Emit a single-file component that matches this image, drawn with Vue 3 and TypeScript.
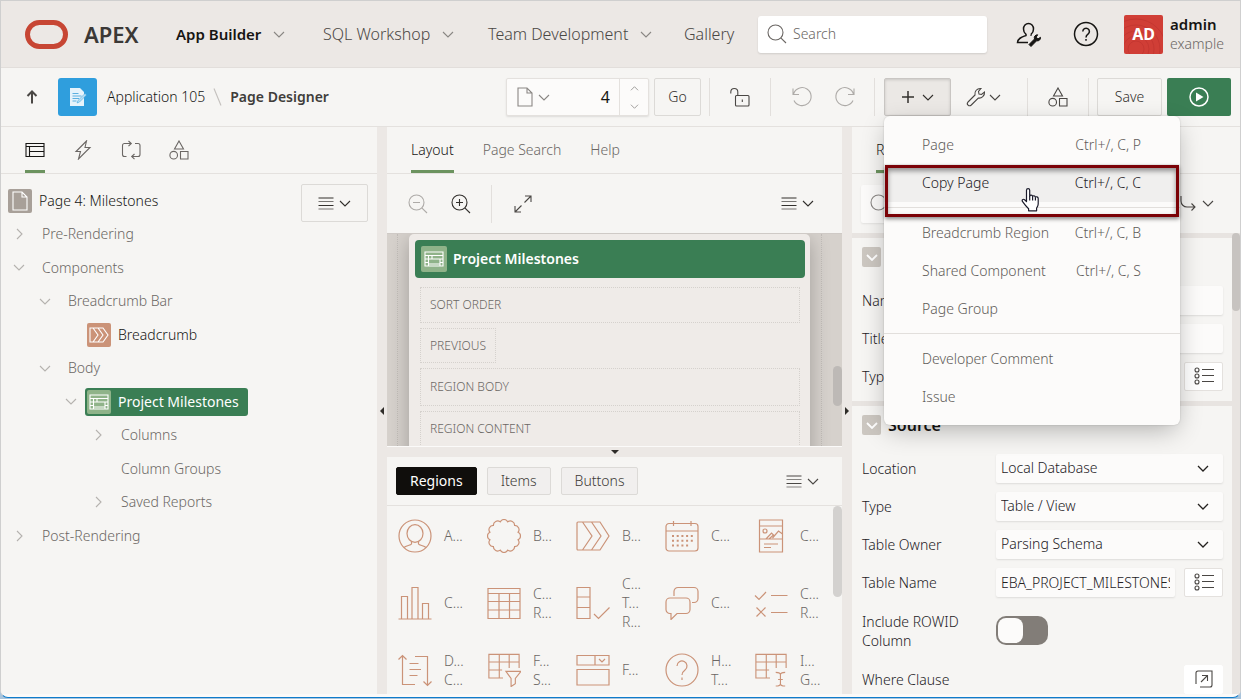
<script setup lang="ts">
import { ref } from 'vue'

interface NavItem { label: string; active?: boolean; menu?: boolean; cls: string }
interface TreeNode { label: string; level: number; state?: 'open' | 'closed'; kind?: 'page' | 'breadcrumb' | 'grid' }
interface MenuEntry { label: string; keys?: string; active?: boolean }
interface GalleryItem { icon: string; lines: string[] }

const nav: NavItem[] = [
  { label: 'App Builder', active: true, menu: true, cls: 'n1' },
  { label: 'SQL Workshop', menu: true, cls: 'n2' },
  { label: 'Team Development', menu: true, cls: 'n3' },
  { label: 'Gallery', cls: 'n4' },
]

const treeTabs = [
  { icon: 'rendering', label: 'Rendering' },
  { icon: 'bolt', label: 'Dynamic Actions' },
  { icon: 'process', label: 'Processing' },
  { icon: 'shapes', label: 'Page Shared Components' },
]

const tree: TreeNode[] = [
  { label: 'Page 4: Milestones', level: 0, kind: 'page' },
  { label: 'Pre-Rendering', level: 1, state: 'closed' },
  { label: 'Components', level: 1, state: 'open' },
  { label: 'Breadcrumb Bar', level: 2, state: 'open' },
  { label: 'Breadcrumb', level: 3, kind: 'breadcrumb' },
  { label: 'Body', level: 2, state: 'open' },
  { label: 'Project Milestones', level: 3, state: 'open', kind: 'grid' },
  { label: 'Columns', level: 4, state: 'closed' },
  { label: 'Column Groups', level: 4 },
  { label: 'Saved Reports', level: 4, state: 'closed' },
  { label: 'Post-Rendering', level: 1, state: 'closed' },
]

const menuGroups: MenuEntry[][] = [
  [
    { label: 'Page', keys: 'Ctrl+/, C, P' },
    { label: 'Copy Page', keys: 'Ctrl+/, C, C', active: true },
  ],
  [
    { label: 'Breadcrumb Region', keys: 'Ctrl+/, C, B' },
    { label: 'Shared Component', keys: 'Ctrl+/, C, S' },
    { label: 'Page Group' },
  ],
  [{ label: 'Developer Comment' }, { label: 'Issue' }],
]

const gallery: GalleryItem[] = [
  { icon: 'g-avatar', lines: ['A...'] },
  { icon: 'g-badge', lines: ['B...'] },
  { icon: 'g-crumb', lines: ['B...'] },
  { icon: 'g-calendar', lines: ['C...'] },
  { icon: 'g-card', lines: ['C...'] },
  { icon: 'g-chart', lines: ['C...'] },
  { icon: 'g-table', lines: ['C...', 'R...'] },
  { icon: 'g-check', lines: ['C...', 'T...', 'R...'] },
  { icon: 'g-comments', lines: ['C...'] },
  { icon: 'g-list', lines: ['C...', 'R...'] },
  { icon: 'g-dynamic', lines: ['D...', 'C...'] },
  { icon: 'g-facet', lines: ['F...', 'S...'] },
  { icon: 'g-form', lines: ['F...'] },
  { icon: 'g-help', lines: ['H...', 'T...'] },
  { icon: 'g-igrid', lines: ['I...', 'G...'] },
]

const pageNo = ref('4')
const tableName = ref('EBA_PROJECT_MILESTONES')
const rowid = ref(false)
</script>

<template>
  <div class="window">
    <svg class="defs" aria-hidden="true">
      <symbol id="down" viewBox="0 0 12 7"><path d="M1 1l5 5 5-5" /></symbol>
      <symbol id="right" viewBox="0 0 7 12"><path d="M1 1l5 5-5 5" /></symbol>
      <symbol id="lines" viewBox="0 0 16 13">
        <path d="M.5 1h15M.5 8.500h15" /><path d="M.5 4.500h15M.5 12h15" opacity=".65" />
      </symbol>
      <symbol id="lens" viewBox="0 0 20 20"><circle cx="8.500" cy="8.500" r="7.500" /><path d="M13.800 13.800L19 19" /></symbol>
      <symbol id="doc" viewBox="0 0 16 20"><path d="M1 1h9l5 5v13H1zM10 1v5h5" /></symbol>
      <symbol id="shapes" viewBox="0 0 20 20">
        <path d="M10 1l4.500 8h-9zM11.500 11.500h7.500v7.500h-7.500z" /><circle cx="4.700" cy="15.200" r="3.800" />
      </symbol>
      <symbol id="rendering" viewBox="0 0 20 20">
        <path d="M1 3.500h18v13H1zM1 6.500h18M4.500 6.500v10M4.500 11.500H19" />
      </symbol>
      <symbol id="bolt" viewBox="0 0 20 20"><path d="M13.500 1L3 11.500h4.500L5.500 19 17 7.500h-5L13.500 1z" /></symbol>
      <symbol id="process" viewBox="0 0 20 20">
        <path d="M10 3.500H3.500a2 2 0 0 0-2 2v9a2 2 0 0 0 2 2h2M7.500 1l2.800 2.500-2.800 2.700M14 3.500h3a2 2 0 0 1 2 2v9a2 2 0 0 1-2 2h-6M13.500 14l-2.800 2.500 2.800 2.700" />
      </symbol>
      <symbol id="gridicon" viewBox="0 0 20 16">
        <path d="M1 1h18v14H1zM1 4.500h18M4.500 4.500V15M4.500 8H12M8 4.500V8M12 8h7M16 8v7M1 8h3.500M1 11.500h3.500M16 11.500h3M4.500 13h11.500" />
      </symbol>
      <symbol id="listicon" viewBox="0 0 20 18">
        <circle cx="3" cy="3" r="2" /><circle cx="3" cy="9" r="2" /><circle cx="3" cy="15" r="2" />
        <path d="M8 2.500h12M8 8.500h12M8 14.500h12" />
      </symbol>
      <symbol id="g-avatar" viewBox="0 0 34 34">
        <circle cx="17" cy="17" r="16" /><ellipse cx="17" cy="14.500" rx="8" ry="8.800" />
        <path d="M6 28.500c2-2 6.500-2 7.500-3.500v-2.500M28 28.500c-2-2-6.500-2-7.500-3.500v-2.500" />
      </symbol>
      <symbol id="g-badge" viewBox="0 0 34 34">
        <path d="M13.200 2.900a4.200 4.200 0 0 1 7.600 0a4.200 4.200 0 0 1 6.800 3.500a4.200 4.200 0 0 1 3.500 6.800a4.200 4.200 0 0 1 0 7.600a4.200 4.200 0 0 1-3.500 6.800a4.200 4.200 0 0 1-6.800 3.500a4.200 4.200 0 0 1-7.600 0a4.200 4.200 0 0 1-6.800-3.500a4.200 4.200 0 0 1-3.500-6.800a4.200 4.200 0 0 1 0-7.600a4.200 4.200 0 0 1 3.500-6.800a4.200 4.200 0 0 1 6.800-3.500z" />
      </symbol>
      <symbol id="g-crumb" viewBox="0 0 34 34">
        <path d="M2 3h22l9 14-9 14H2a1 1 0 0 1-1-1V4a1 1 0 0 1 1-1zM6.500 3l9.500 14-9.500 14M15.500 3l9.500 14-9.500 14" />
      </symbol>
      <symbol id="g-calendar" viewBox="0 0 34 34">
        <path d="M4 4.500h26a3 3 0 0 1 3 3V29a3 3 0 0 1-3 3H4a3 3 0 0 1-3-3V7.500a3 3 0 0 1 3-3zM1 12h32M8.500 2v5M26 2v5" />
        <path stroke-width="2" stroke-dasharray="2 2.700" d="M7 17h22M7 21.700h22M7 26.500h17" />
      </symbol>
      <symbol id="g-card" viewBox="0 0 34 34">
        <path d="M5.500 1h23v32h-23zM5.500 7h23M5.500 20h23M12 20l5.500-6 2 2-4.500 4M18.500 19l6-7 4 3M10 25h14M10 28.500h7" /><circle cx="11" cy="12" r="2" />
      </symbol>
      <symbol id="g-chart" viewBox="0 0 34 34">
        <path d="M.5 33h33M3.500 33V10.500h6V33M14 33V1.500h6V33M24.500 33V17.500h6V33" />
      </symbol>
      <symbol id="g-table" viewBox="0 0 34 34">
        <path d="M1 2.500h32v30H1zM1 7.500h32M1 15.500h32M1 24h32M12 7.500v25M22.500 7.500v25" />
      </symbol>
      <symbol id="g-check" viewBox="0 0 34 34">
        <path d="M1 1.500h13v31H1zM1 11h13M1 21.500h13M18 28l4.500 4.500L33.500 21.500" />
      </symbol>
      <symbol id="g-comments" viewBox="0 0 34 34">
        <path d="M9 10V5.500a4 4 0 0 1 4-4h16a4 4 0 0 1 4 4v7a4 4 0 0 1-4 4h-2M5 12h16a4 4 0 0 1 4 4v7.500a4 4 0 0 1-4 4h-9l-6 6v-6H5a4 4 0 0 1-4-4V16a4 4 0 0 1 4-4z" />
      </symbol>
      <symbol id="g-list" viewBox="0 0 34 34">
        <path d="M1 9.500l4 4 7-7.500M17 9.500h16.500M17 26.500h16.500M2.500 21.500l9 9M11.500 21.500l-9 9" />
      </symbol>
      <symbol id="g-dynamic" viewBox="0 0 34 34">
        <path d="M4.500 2.500v29H17M.5 6.500l4-4 4 4M17 3.500h12.500v29M25.500 28.500l4 4 4-4M11.500 10.500h9M11.500 16.500h11.500M11.500 22.500h8" />
      </symbol>
      <symbol id="g-facet" viewBox="0 0 34 36">
        <path d="M16 26.500H1v-25h32V16M1 9.500h32M1 18h14M12 1.500v25M22.500 1.500V16M19 19.500h16L29 27v5.500l-4.500 3V27z" />
      </symbol>
      <symbol id="g-form" viewBox="0 0 34 34">
        <path d="M1 2.500h32v9.500H1zM19 2.500V12M23 6l3 3 3-3M1 16.500h32v15.500H1z" />
      </symbol>
      <symbol id="g-help" viewBox="0 0 34 34">
        <circle cx="17" cy="17" r="16" /><path d="M12 13a5 5 0 1 1 8 4c-2 1.500-3 2.500-3 5M17 24.500v2.500" />
      </symbol>
      <symbol id="g-igrid" viewBox="0 0 34 36">
        <path d="M16 26.500H1v-25h32V16M1 9.500h32M1 18h14M12 1.500v25M22.500 1.500V16M27 22v12M24.500 28h5M22 20.500c3 0 5 .5 5 2.500 0-2 2-2.500 5-2.500M22 35c3 0 5-.5 5-2.500 0 2 2 2.500 5 2.500" />
      </symbol>
    </svg>

    <header class="top">
      <a class="brand" href="#" aria-label="APEX home">
        <svg class="logo" viewBox="0 0 43 29"><rect x="2.500" y="2.500" width="38" height="24" rx="12" /></svg>
        <span>APEX</span>
      </a>
      <nav class="nav">
        <a v-for="n in nav" :key="n.label" href="#" :class="[n.cls, { active: n.active }]">
          {{ n.label }}
          <svg v-if="n.menu" class="ico chev"><use href="#down" /></svg>
        </a>
      </nav>
      <label class="search">
        <svg class="ico s20"><use href="#lens" /></svg>
        <input type="text" placeholder="Search" aria-label="Search" />
      </label>
      <button class="plain admin-btn" aria-label="Administration">
        <svg class="ico s26" viewBox="0 0 26 26">
          <path d="M7.500 8a5 5.500 0 1 1 10 0c0 2.500-1.200 4.400-2.500 5.400M7.500 8c0 2.500 1.200 4.400 2.500 5.400v1.100c-4 1.500-8 2.500-8.500 7h10.500M15 13.400v1.400" />
          <path class="spanner" d="M13 23.500l5.500-5.500c-.8-2.200.6-4.200 3.200-4.200l-1.500 2.300 1.800 1.800 2.500-1.600c.2 2.600-1.800 4-3.900 3.500l-5.600 5.700z" />
        </svg>
      </button>
      <button class="plain help-btn" aria-label="Help">
        <svg class="ico s26" viewBox="0 0 26 26"><circle cx="13" cy="13" r="11.500" /><path d="M9.800 10.500a3.300 3.300 0 1 1 5.200 2.700c-1.400 1-2 1.600-2 3.300M13 18v1.800" /></svg>
      </button>
      <a class="user" href="#">
        <span class="avatar">
          <svg viewBox="0 0 39 39" aria-hidden="true"><circle cx="12" cy="34" r="8" /><circle cx="12" cy="34" r="13" /><circle cx="12" cy="34" r="18" /><circle cx="12" cy="34" r="24" /><circle cx="12" cy="34" r="30" /></svg>
          <b>AD</b>
        </span>
        <span class="who"><b>admin</b><small>example</small></span>
      </a>
    </header>

    <div class="toolbar">
      <button class="plain up" aria-label="Up">
        <svg class="ico bold" viewBox="0 0 12 14"><path d="M6 13.500V1.500M1.500 6L6 1.500 10.500 6" /></svg>
      </button>
      <span class="appicon">
        <svg viewBox="0 0 20 20"><path class="sheet" d="M2 1h10l4 4v14H2z" /><path class="ink" d="M4.500 6.500h6M4.500 9h9M4.500 11.500h6.500M4.500 14h4" /><path class="pen" d="M18.500 8l-7 7-2.500 1 1-2.600L17 6.500z" /></svg>
      </span>
      <a class="crumb" href="#">Application 105</a>
      <svg class="ico slash" viewBox="0 0 9 18"><path d="M1 .5l7 17" /></svg>
      <h1>Page Designer</h1>

      <div class="tools">
        <div class="pagebox">
          <button class="plain" aria-label="Select page"><svg class="ico doc"><use href="#doc" /></svg><svg class="ico chev"><use href="#down" /></svg></button>
          <input v-model="pageNo" type="text" aria-label="Page number" />
          <div class="spin">
            <button class="plain flip" aria-label="Next page"><svg class="ico tiny"><use href="#down" /></svg></button>
            <button class="plain" aria-label="Previous page"><svg class="ico tiny"><use href="#down" /></svg></button>
          </div>
        </div>
        <button class="btn go">Go</button>
        <i class="sep"></i>
        <button class="plain w60" aria-label="Unlock"><svg class="ico s20" viewBox="0 0 20 20"><rect x="5.500" y="8.500" width="13.500" height="10.500" rx="1" /><path d="M.800 6.500V5a3.500 3.500 0 0 1 7 0v3.500M12.300 12.500v2.500" /></svg></button>
        <i class="sep flush"></i>
        <div class="history">
          <button class="plain" disabled aria-label="Undo"><svg class="ico s20" viewBox="0 0 20 20"><path d="M1 1.500v6h6M1.500 7A9 9 0 1 1 2 13.500" /></svg></button>
          <button class="plain" disabled aria-label="Redo"><svg class="ico s20" viewBox="0 0 20 20"><path d="M19 1.500v6h-6M18.500 7A9 9 0 1 0 18 13.500" /></svg></button>
        </div>
        <i class="sep flush"></i>
        <div class="create">
          <button class="btn pressed" aria-haspopup="menu" aria-expanded="true" aria-label="Create">
            <svg class="ico plus" viewBox="0 0 12 12"><path d="M6 0v12M0 6h12" /></svg><svg class="ico chev"><use href="#down" /></svg>
          </button>
          <div class="menu" role="menu">
            <div v-for="(g, i) in menuGroups" :key="i" class="group">
              <button v-for="m in g" :key="m.label" class="entry" :class="{ on: m.active }" role="menuitem">
                <span>{{ m.label }}</span><span>{{ m.keys }}</span>
              </button>
            </div>
            <div class="callout"></div>
            <svg class="pointer" viewBox="0 0 20 25">
              <path d="M5.500 14.500V3.200c0-2.200 3.200-2.200 3.200 0v6c.3-1.500 2.800-1.400 2.900.3.500-1.200 2.700-.9 2.800.8.600-1 2.800-.6 2.800 1.200V17c0 1.600-.7 2.900-1.600 4.200v2.600H7.600v-2C5.500 19.800 3.600 17.400 1.600 14.600c-1.200-1.700.6-3 2-1.900z" /><path d="M8.700 9v4.500M11.600 9.700v3.800M14.400 10.500v3" />
            </svg>
          </div>
        </div>
        <button class="plain util" aria-label="Utilities"><svg class="ico s20" viewBox="0 0 20 20"><path d="M2 15l7-7c-.8-3.500 2-7 6-6.500l-2.500 3 .5 2.500 2.500.500 3-2.500c.5 4-3 6.500-6.200 6l-7 7c-2.300 2-5.300-.8-3.300-3z" /></svg><svg class="ico chev"><use href="#down" /></svg></button>
        <i class="sep flush"></i>
        <button class="plain w60" aria-label="Shared components"><svg class="ico s20"><use href="#shapes" /></svg></button>
        <i class="sep flush"></i>
        <button class="btn save">Save</button>
        <button class="run" aria-label="Save and run page">
          <svg viewBox="0 0 20 20"><circle cx="10" cy="10" r="9" /><path d="M7 5.500v9l7.500-4.500z" /></svg>
        </button>
      </div>
    </div>

    <main class="main">
      <section class="pane left">
        <div class="tabs icons">
          <button v-for="(t, i) in treeTabs" :key="t.icon" class="tab" :class="{ active: i === 0 }" :aria-label="t.label">
            <svg class="ico s20"><use :href="'#' + t.icon" /></svg>
          </button>
        </div>
        <div class="treewrap">
          <ul class="tree">
            <li v-for="n in tree" :key="n.label" :class="['l' + n.level, n.kind]">
              <span class="twist"><svg v-if="n.state === 'open'" class="ico chev"><use href="#down" /></svg><svg v-if="n.state === 'closed'" class="ico rchev"><use href="#right" /></svg></span>
              <span class="node">
                <span v-if="n.kind" class="badge">
                  <svg v-if="n.kind === 'page'" class="ico doc"><use href="#doc" /></svg>
                  <svg v-else-if="n.kind === 'grid'" class="ico gi"><use href="#gridicon" /></svg>
                  <svg v-else class="ico s20" viewBox="0 0 20 20"><path d="M1 3h13l5 7-5 7H1zM4 3l5 7-5 7M9 3l5 7-5 7" /></svg>
                </span>{{ n.label }}
              </span>
            </li>
          </ul>
          <button class="btn treemenu" aria-label="Tree menu"><svg class="ico lines"><use href="#lines" /></svg><svg class="ico chev"><use href="#down" /></svg></button>
        </div>
      </section>

      <div class="split"><i class="arrow-l"></i></div>

      <section class="center">
        <div class="pane">
          <div class="tabs text">
            <button class="tab active">Layout</button>
            <button class="tab">Page Search</button>
            <button class="tab">Help</button>
          </div>
          <div class="layoutbar">
            <button class="plain z1" disabled aria-label="Zoom out"><svg class="ico s20"><use href="#lens" /><path d="M5 8.500h7" /></svg></button>
            <button class="plain z2" aria-label="Zoom in"><svg class="ico s20"><use href="#lens" /><path d="M5 8.500h7M8.500 5v7" /></svg></button>
            <i class="sep tall"></i>
            <button class="plain z3" aria-label="Expand"><svg class="ico s18" viewBox="0 0 18 18"><path d="M11 1h6v6M17 1l-6.500 6.500M7 17H1v-6M1 17l6.500-6.500" /></svg></button>
            <button class="plain z4" aria-label="Layout menu"><svg class="ico lines"><use href="#lines" /></svg><svg class="ico chev"><use href="#down" /></svg></button>
          </div>
        </div>
        <div class="canvas">
          <div class="body">
            <div class="card">
              <div class="cardhead"><span class="badge"><svg class="ico gi"><use href="#gridicon" /></svg></span>Project Milestones</div>
              <div class="slots">
                <div class="slot">SORT ORDER</div>
                <div class="slot short">PREVIOUS</div>
                <div class="slot big">REGION BODY</div>
                <div class="slot">REGION CONTENT</div>
              </div>
            </div>
          </div>
          <i class="thumb"></i>
        </div>
        <div class="hsplit"><i class="arrow-d"></i></div>
        <div class="pane bottom">
          <div class="switch">
            <button class="btn dark">Regions</button>
            <button class="btn soft">Items</button>
            <button class="btn soft">Buttons</button>
            <button class="plain z5" aria-label="Gallery menu"><svg class="ico lines"><use href="#lines" /></svg><svg class="ico chev"><use href="#down" /></svg></button>
          </div>
          <div class="gallery">
            <div v-for="g in gallery" :key="g.icon" class="gitem">
              <svg class="gico"><use :href="'#' + g.icon" /></svg>
              <span><span v-for="l in g.lines" :key="l">{{ l }}</span></span>
            </div>
            <i class="thumb"></i>
          </div>
        </div>
      </section>

      <div class="split"><i class="arrow-r"></i></div>

      <section class="pane right">
        <div class="tabs text"><button class="tab active">Region</button></div>
        <div class="filter">
          <label class="fsearch"><svg class="ico s20"><use href="#lens" /></svg><input type="text" aria-label="Filter properties" /></label>
          <button class="plain goto" aria-label="Go to group"><svg class="ico s20" viewBox="0 0 20 20"><path d="M4 2v5a6 6 0 0 0 6 6h8M14.500 9.500L18 13l-3.500 3.500" /></svg><svg class="ico chev"><use href="#down" /></svg></button>
        </div>
        <div class="props">
          <div class="list">
            <div class="sect" aria-label="Identification">
              <div class="sh"><button class="fold" aria-label="Collapse Identification"><svg class="ico chev"><use href="#down" /></svg></button></div>
              <div class="row"><label for="pname">Name</label><input id="pname" type="text" /></div>
              <div class="row"><label for="ptitle">Title</label><input id="ptitle" type="text" /></div>
              <div class="row"><label for="ptype">Type</label><input id="ptype" type="text" /><button class="pick" aria-label="Pick type"><svg class="ico li"><use href="#listicon" /></svg></button></div>
            </div>
            <div class="sect">
              <div class="sh"><button class="fold" aria-label="Collapse Source"><svg class="ico chev"><use href="#down" /></svg></button><h2>Source</h2></div>
              <div class="row"><label for="loc">Location</label><span class="sel"><select id="loc"><option>Local Database</option></select><svg class="ico chev"><use href="#down" /></svg></span></div>
              <div class="row"><label for="styp">Type</label><span class="sel"><select id="styp"><option>Table / View</option></select><svg class="ico chev"><use href="#down" /></svg></span></div>
              <div class="row"><label for="own">Table Owner</label><span class="sel"><select id="own"><option>Parsing Schema</option></select><svg class="ico chev"><use href="#down" /></svg></span></div>
              <div class="row"><label for="tname">Table Name</label><input id="tname" v-model="tableName" type="text" /><button class="pick" aria-label="Pick table"><svg class="ico li"><use href="#listicon" /></svg></button></div>
              <div class="row two"><label for="rid">Include ROWID Column</label><input id="rid" v-model="rowid" type="checkbox" role="switch" /></div>
              <div class="row"><span class="lab">Where Clause</span><button class="pick flat" aria-label="Edit where clause"><svg class="ico s18" viewBox="0 0 18 18"><path d="M1 14V3a2 2 0 0 1 2-2h14v14a2 2 0 0 1-2 2H5M6 12l6-6M7 5.500h5.500V11" /></svg></button></div>
            </div>
          </div>
          <div class="rail"><i class="railthumb"></i></div>
        </div>
      </section>
    </main>
  </div>
</template>

<style>
body { background: #a9c4dc; }
</style>

<style scoped>
* { box-sizing: border-box; }
.window {
  height: calc(100vh - 1px); min-height: 600px; display: flex; flex-direction: column; overflow: hidden;
  border: 1px solid #cfcfcf; border-bottom: 1px solid #0f7ccb; border-radius: 0 0 8px 8px;
  background: #fbfaf9; color: #161513; padding-bottom: 3px;
  font: 350 14px/20px "Noto Sans", "Open Sans", sans-serif;
}
.defs { position: absolute; width: 0; height: 0; }
button, input, select { font: inherit; color: inherit; margin: 0; }
button { cursor: pointer; padding: 0; }
a { color: inherit; text-decoration: none; }
.ico { fill: none; stroke: currentColor; stroke-width: 1.1; flex: none; display: block; overflow: visible; }
.chev { width: 12px; height: 7px; }
.rchev { width: 7px; height: 12px; }
.tiny { width: 9px; height: 5px; }
.s18 { width: 18px; height: 18px; }
.s20 { width: 20px; height: 20px; }
.s26 { width: 26px; height: 26px; stroke-width: 1.5; }
.spanner { fill: currentColor; stroke-width: 1; }
.doc { width: 16px; height: 20px; }
.lines { width: 16px; height: 13px; }
.gi { width: 20px; height: 16px; }
.li { width: 20px; height: 18px; }
.plain { border: 0; background: none; display: flex; align-items: center; justify-content: center; color: #4a4744; }
.plain:disabled { color: #aeaba8; }
.btn { border: 1px solid #dcdad7; border-radius: 2px; background: #f6f5f3; display: flex; align-items: center; justify-content: center; height: 38px; color: #33302d; }

.top { flex: none; height: 67px; background: #ece8e5; border-bottom: 1px solid #e2dedb; display: flex; align-items: center; padding: 0 16px 0 24px; }
.brand { flex: none; display: flex; align-items: center; gap: 16px; width: 151px; font-size: 22px; font-weight: 600; color: #3b3836; }
.logo { width: 43px; height: 29px; fill: none; stroke: #c74634; stroke-width: 5; }
.nav { flex: none; display: flex; font-size: 16px; font-weight: 300; color: #4a4744; white-space: nowrap; }
.nav a { display: flex; align-items: center; gap: 12px; }
.nav .active { color: #161513; font-size: 15px; font-weight: 600; }
.nav .chev { color: #8a8784; }
.n1 { width: 147px; } .n2 { width: 165px; } .n3 { width: 196px; } .n4 { width: 74px; }
.search { flex: 1; min-width: 0; height: 37px; background: #fff; border-radius: 3px; box-shadow: 0 1px 2px rgba(0, 0, 0, .12); display: flex; align-items: center; padding-left: 9px; gap: 4px; color: #6b6764; }
.search input { flex: 1; min-width: 0; border: 0; outline: 0; background: none; }
.search input::placeholder { color: #6b6764; opacity: 1; }
.admin-btn { margin-left: 29px; color: #161513; }
.help-btn { margin-left: 31px; color: #161513; }
.user { display: flex; gap: 7px; align-items: center; margin-left: 25px; }
.avatar { position: relative; width: 39px; height: 39px; border-radius: 2px; background: #d13f37; color: #fff; display: grid; place-items: center; overflow: hidden; font-size: 16px; }
.avatar svg { position: absolute; inset: 0; fill: none; stroke: #c0352f; stroke-width: 1; opacity: .7; }
.avatar b { position: relative; font-weight: 700; }
.who { display: flex; flex-direction: column; }
.who b { font-size: 15px; line-height: 20px; font-weight: 600; }
.who small { font-size: 14px; line-height: 20px; color: #6b6764; }

.toolbar { flex: none; height: 59px; background: #f6f5f3; border-bottom: 1px solid #e4e1de; display: flex; align-items: center; padding: 0 9px 0 25px; }
.up .ico { width: 12px; height: 14px; stroke-width: 2; }
.appicon { width: 39px; height: 38px; margin-left: 20px; border-radius: 3px; background: #2f9edd; display: grid; place-items: center; }
.appicon svg { width: 20px; height: 20px; }
.sheet { fill: #e6f3fb; } .ink { fill: none; stroke: #5cb0e0; } .pen { fill: #b9def3; stroke: #2f9edd; stroke-width: .5; }
.crumb { margin-left: 10px; white-space: nowrap; }
.slash { width: 9px; height: 18px; margin: 0 8px; color: #c3c0bd; }
h1 { margin: 0; font-size: 14px; line-height: 20px; font-weight: 600; color: #403d3a; white-space: nowrap; }
.tools { margin-left: auto; display: flex; align-items: center; }
.pagebox { display: flex; width: 143px; height: 38px; background: #fcfbfa; border: 1px solid #e4e1de; border-radius: 2px; box-shadow: 0 1px 2px rgba(0, 0, 0, .1); }
.pagebox > button { gap: 5px; padding-left: 10px; color: #8a8784; }
.pagebox input { flex: 1; min-width: 0; width: 0; border: 0; background: none; text-align: right; padding: 0 9px 0 0; font-size: 16px; font-weight: 400; }
.spin { width: 29px; border-left: 1px solid #e4e1de; display: flex; flex-direction: column; color: #8a8784; }
.spin button { flex: 1; color: #8a8784; }
.flip svg { transform: rotate(180deg); }
.go { width: 47px; margin-left: 5px; }
.sep { flex: none; width: 1px; height: 38px; background: #e2dfdc; margin-left: 8px; }
.sep.flush { margin-left: 0; }
.w60 { width: 60px; height: 38px; }
.history { display: flex; padding: 0 8px 0 9px; }
.history button { width: 43px; height: 38px; }
.create { position: relative; margin-left: 9px; }
.pressed { width: 67px; gap: 8px; background: #ebe8e5; border-color: #c9c6c3; box-shadow: inset 0 1px 3px rgba(0, 0, 0, .15); }
.plus { width: 12px; height: 12px; stroke-width: 1.5; }
.util { width: 64px; height: 38px; gap: 3px; margin-right: 12px; }
.save { width: 65px; margin-left: 8px; }
.run { width: 64px; height: 38px; margin-left: 5px; border: 0; border-radius: 2px; background: #3a7e54; display: grid; place-items: center; }
.run svg { width: 20px; height: 20px; fill: #fff; }
.run circle { fill: none; stroke: #fff; stroke-width: 1.5; }

.menu { position: absolute; z-index: 10; top: 38px; left: 0; width: 296px; padding: 10px 0 9px; background: #fcfbfa; border-radius: 6px; box-shadow: 0 8px 26px -4px rgba(0, 0, 0, .3), 0 0 2px rgba(0, 0, 0, .18); }
.group + .group { border-top: 1px solid #e2dfdc; margin-top: 5px; padding-top: 6px; }
.entry { width: 100%; height: 38px; border: 0; background: none; display: flex; justify-content: space-between; align-items: center; padding: 0 39px 0 38px; color: #5f5c59; }
.entry.on { background: #f0efee; color: #24211f; }
.callout { position: absolute; left: 1px; right: 1px; top: 49px; height: 52px; border: 3px solid #7b0207; box-shadow: 0 2px 4px rgba(0, 0, 0, .45), inset 0 3px 5px rgba(0, 0, 0, .4); pointer-events: none; }
.pointer { position: absolute; left: 137px; top: 71px; width: 20px; height: 25px; fill: #fff; stroke: #1b1b2b; stroke-width: 1.2; stroke-linejoin: round; }

.main { flex: 1; min-height: 0; display: grid; grid-template-columns: 376fr 10px 455fr 10px 388fr; }
.pane { background: #f6f5f3; min-width: 0; }
.tabs { height: 47px; border-bottom: 1px solid #e4e1de; display: flex; align-items: stretch; padding-left: 24px; }
.tab { border: 0; border-bottom: 3px solid transparent; background: none; color: #6b6764; padding: 3px 0 0; display: flex; align-items: center; }
.tab.active { border-color: #6c935f; color: #161513; }
.icons { gap: 28px; }
.text { gap: 29px; }
.treewrap { display: flex; align-items: flex-start; justify-content: space-between; padding: 10px 9px 0 7px; }
.tree { list-style: none; margin: 0; padding: 0; color: #6b6764; white-space: nowrap; }
.tree li { display: flex; align-items: center; height: 33px; }
.tree li:nth-child(even) { height: 34px; }
.twist { width: 12px; display: flex; justify-content: center; color: #b5b2af; margin-right: 17px; }
.l1 { padding-left: 5px; } .l2 { padding-left: 31px; } .l3 { padding-left: 57px; } .l4 { padding-left: 84px; }
.l0 .twist { display: none; }
.l3 .twist { margin-right: 8px; }
.node { display: flex; align-items: center; height: 28px; border-radius: 3px; }
.page .node, .breadcrumb .node { color: #161513; }
.breadcrumb .node { padding-left: 2px; }
.badge { width: 24px; height: 24px; border-radius: 2px; background: #a8a099; color: #fff; display: grid; place-items: center; margin-right: 7px; }
.breadcrumb .badge { background: #cb9378; }
.grid .node { background: #3a7e54; color: #fff; font-weight: 400; padding: 0 9px 0 2px; }
.grid .badge, .cardhead .badge { background: #8fb389; }
.treemenu { width: 67px; gap: 5px; }

.split, .hsplit { background: #ece8e5; display: flex; align-items: center; justify-content: center; }
.hsplit { flex: none; height: 11px; border-top: 1px solid #fbfaf9; }
.arrow-l, .arrow-r { border: 4px solid transparent; }
.arrow-l { border-right-color: #2f2c29; border-left: 0; }
.arrow-r { border-left-color: #2f2c29; border-right: 0; }
.arrow-d { border: 4px solid transparent; border-top-color: #2f2c29; border-bottom: 0; }
.center { display: flex; flex-direction: column; min-width: 0; min-height: 0; }
.layoutbar { height: 59px; display: flex; align-items: center; padding-left: 21px; }
.z2 { margin-left: 23px; color: #33302d; }
.tall { margin-left: 20px; }
.z3 { margin-left: 22px; }
.z4 { margin: 0 28px 0 auto; gap: 5px; color: #33302d; }
.z5 { margin: 0 23px 0 auto; gap: 5px; }
.canvas { position: relative; flex: 1; min-height: 0; overflow: hidden; background: #d6d1cc; border-top: 1px solid #cfcac6; padding: 0 20px 0 10px; }
.body { border: 1px dotted #c2bdb9; border-width: 0 1px; height: 100%; padding: 0 11px; }
.card { background: #efebe8; border-radius: 5px 5px 0 0; height: 110%; padding: 6px 5px 0 6px; box-shadow: 0 6px 20px rgba(0, 0, 0, .25); }
.cardhead { height: 38px; background: #3a7e54; color: #fff; border-radius: 4px; display: flex; align-items: center; padding-left: 6px; font-weight: 600; }
.cardhead .badge { width: 26px; height: 26px; margin-right: 6px; }
.slots { padding: 9px 5px 0; display: flex; flex-direction: column; gap: 5px; align-items: stretch; font-size: 12px; color: #6b6764; }
.slot { border: 1px dotted #d5d1cd; height: 36px; display: flex; align-items: center; padding-left: 9px; }
.slot.short { height: 35px; align-self: flex-start; padding-right: 9px; }
.slot.big { height: 38px; }
.thumb { position: absolute; right: 0; top: 132px; width: 9px; height: 40px; border-radius: 5px; background: #bdb9b6; }
.bottom { flex: none; height: 237px; display: flex; flex-direction: column; }
.switch { height: 49px; border-bottom: 1px solid #e4e1de; display: flex; align-items: center; gap: 10px; padding-left: 9px; }
.switch .btn { height: 28px; padding: 0 13px; }
.switch .soft { background: #f1efee; color: #3d3a37; }
.switch .dark { background: #100e0c; border-color: #100e0c; color: #fff; font-weight: 400; }
.gallery { position: relative; flex: 1; min-height: 0; overflow: hidden; display: grid; grid-template-columns: repeat(5, 89px); grid-auto-rows: 67px; padding: 0 0 0 11px; align-content: start; margin-top: -4px; }
.gitem { display: flex; align-items: center; gap: 12px; font-size: 14px; line-height: 19px; color: #6b6764; }
.gitem span span { display: block; }
.gico { width: 34px; height: 34px; flex: none; overflow: visible; fill: none; stroke: #cb9378; stroke-width: 1.2; }
.gallery .thumb { top: 4px; height: 91px; background: #d3d1cf; }

.right { display: flex; flex-direction: column; min-height: 0; }
.right .tabs { flex: none; }
.filter { flex: none; height: 59px; display: flex; align-items: center; padding: 0 26px 0 9px; }
.fsearch { flex: 1; height: 38px; background: #fcfbfa; border-radius: 2px; box-shadow: 0 1px 2px rgba(0, 0, 0, .08); display: flex; align-items: center; padding-left: 9px; color: #8a8784; }
.fsearch input { flex: 1; min-width: 0; border: 0; background: none; }
.goto { margin-left: 6px; gap: 5px; }
.props { flex: 1; min-height: 0; display: flex; }
.list { flex: 1; min-width: 0; overflow: hidden; }
.rail { width: 8px; background: #e8e4e1; }
.railthumb { display: block; height: 78px; border-radius: 5px; background: #c7c3c0; }
.sect { border-top: 5px solid #e8e4e1; padding: 0 9px 6px; }
.sh { height: 43px; display: flex; align-items: flex-start; padding: 9px 0 0 1px; gap: 7px; }
.fold { width: 19px; height: 20px; border: 0; border-radius: 2px; background: #ccc7c1; color: #fff; display: grid; place-items: center; }
.fold .chev { stroke-width: 1.8; }
h2 { margin: 0; font-size: 16px; line-height: 20px; font-weight: 600; }
.row { min-height: 38px; display: flex; align-items: center; padding-left: 1px; color: #24211f; }
.row label, .lab { flex: 0 0 134px; line-height: 19px; padding-right: 20px; }
.row.two { min-height: 59px; }
.row input[type="text"], select { flex: 1; width: 0; min-width: 0; height: 29px; border: 0; border-radius: 2px; background: #fcfbfa; box-shadow: 0 1px 2px rgba(0, 0, 0, .1); padding: 0 5px; }
.sel { flex: 1; display: flex; position: relative; align-items: center; }
.sel .chev { position: absolute; right: 14px; pointer-events: none; stroke-width: 1.3; }
select { appearance: none; }
.pick { width: 39px; height: 29px; margin-left: 9px; background: #fff; border: 1px solid #e4e1de; border-radius: 2px; display: grid; place-items: center; color: #4a4744; }
.pick.flat { margin-left: auto; border-color: #fff; }
input[type="checkbox"] { appearance: none; width: 52px; height: 29px; border-radius: 10px; background: #827d78; padding: 2px; }
input[type="checkbox"]::before { content: ""; display: block; width: 25px; height: 25px; border-radius: 8px; background: #fcfbfa; }
</style>
